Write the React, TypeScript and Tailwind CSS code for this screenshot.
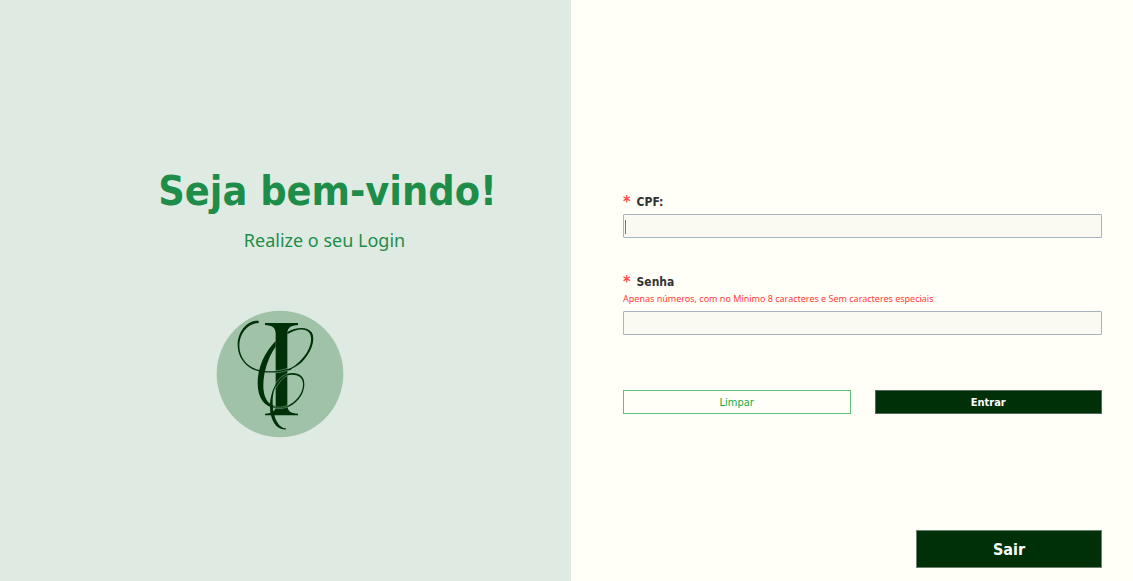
import { useState } from "react";

function Monogram() {
  return (
    <svg viewBox="18 15 384 384" className="size-32" role="img" aria-label="Logo">
      <circle cx="210" cy="207" r="190" fill="#9fc2a8" />
      <g fill="#003008">
        <path d="M165 54H264V60C243 61 233 68 232 84V302C233 318 242 325 264 326V331H165V326C188 324 197 318 197 302V84C196 68 187 61 165 60Z" />
        <path d="M197 108C163 142 143 188 143 234C143 277 161 307 197 309L197 304C171 299 159 274 160 238C161 200 175 155 197 125Z" />
        <path d="M232 81C258 66 291 63 305 82C319 105 302 145 276 171C266 181 252 188 240 194L239 191C273 173 306 132 303 98C301 69 266 66 232 88Z" />
        <path d="M146 47C112 45 82 79 83 122C84 164 117 198 160 201L160 197C120 194 88 163 88 122C88 84 115 53 146 54Z" />
        <path d="M232 206C260 200 283 209 283 237C283 272 254 304 222 309L222 306C251 298 280 269 279 236C278 213 257 206 232 211C201 223 187 254 188 296C189 333 203 368 228 370V373C200 376 181 347 180 308C179 265 198 219 232 206Z" />
      </g>
      <g fill="none" strokeLinecap="round">
        <path d="M158 199C187 202 219 200 242 192" stroke="#003008" strokeWidth="4" />
        <path d="M197 197C209 197 221 194 232 190M197 203C209 203 221 201 232 196" stroke="#6f9c7b" strokeWidth="2" />
        <path d="M197 235C207 220 219 211 232 205M199 247C208 230 219 218 232 211M191 304C204 309 220 307 232 301M192 310C207 312 220 311 232 306" stroke="#6f9c7b" strokeWidth="2" />
      </g>
    </svg>
  );
}

const labelClass = "flex h-5 items-center gap-1.5 text-xs font-bold text-[#333333]";
const starClass = "text-base text-[#ff4a4a]";
const fieldClass =
  "h-6 w-full rounded-[1px] border border-[#a6b4bd] bg-[#fafaf3] px-1 text-xs text-[#333333] outline-none";

export default function App() {
  const [cpf, setCpf] = useState("");
  const [senha, setSenha] = useState("");

  return (
    <main className="flex min-h-screen bg-[#fffff7] font-['DejaVu_Sans_Condensed','Noto_Sans',sans-serif]">
      <section className="flex w-[50.4%] flex-col bg-[#dfeae2] pt-[165px] text-[#1f8d4a]">
        <div className="flex flex-col items-center pl-[84px]">
          <h1 className="text-[41px] leading-[52px] font-bold whitespace-nowrap">Seja bem-vindo!</h1>
          <p className="mt-[11px] pr-1.5 font-['Noto_Sans',sans-serif] text-lg leading-6">Realize o seu Login</p>
        </div>
        <div className="mt-[58px] flex justify-center pr-3">
          <Monogram />
        </div>
      </section>

      <form
        className="flex min-w-0 flex-1 flex-col pt-[192px] pr-[31px] pb-[13px] pl-[52px]"
        onSubmit={(e) => e.preventDefault()}
      >
        <label htmlFor="cpf" className={labelClass}>
          <span className={starClass}>*</span>CPF:
        </label>
        <div className="relative mt-0.5 flex">
          <input
            id="cpf"
            value={cpf}
            onChange={(e) => setCpf(e.target.value)}
            className={`peer ${fieldClass}`}
          />
          {cpf === "" && (
            <span aria-hidden="true" className="pointer-events-none absolute top-1.5 left-0.5 h-3.5 w-px bg-[#777777] peer-focus:hidden" />
          )}
        </div>

        <label htmlFor="senha" className={`mt-[34px] ${labelClass}`}>
          <span className={starClass}>*</span>Senha
        </label>
        <p id="senha-dica" className="font-['Noto_Sans',sans-serif] text-[9px] leading-[14px] text-[#ff4040]">
          Apenas números, com no Mínimo 8 caracteres e Sem caracteres especiais
        </p>
        <input
          id="senha"
          type="password"
          aria-describedby="senha-dica"
          value={senha}
          onChange={(e) => setSenha(e.target.value)}
          className={`${fieldClass} mt-[5px]`}
        />

        <div className="mt-[55px] grid grid-cols-2 gap-6">
          <button
            type="button"
            onClick={() => {
              setCpf("");
              setSenha("");
            }}
            className="h-6 border border-[#5fc17c] pt-0.5 text-[11px] text-[#12a84b]"
          >
            Limpar
          </button>
          <button
            type="submit"
            className="h-6 border border-[#536b5c] bg-[#003008] pt-0.5 text-[11px] font-bold text-white"
          >
            Entrar
          </button>
        </div>

        <button
          type="button"
          className="mt-auto h-[38px] w-[186px] self-end border border-[#6b7f73] bg-[#003008] pt-0.5 text-base font-bold text-white"
        >
          Sair
        </button>
      </form>
    </main>
  );
}
